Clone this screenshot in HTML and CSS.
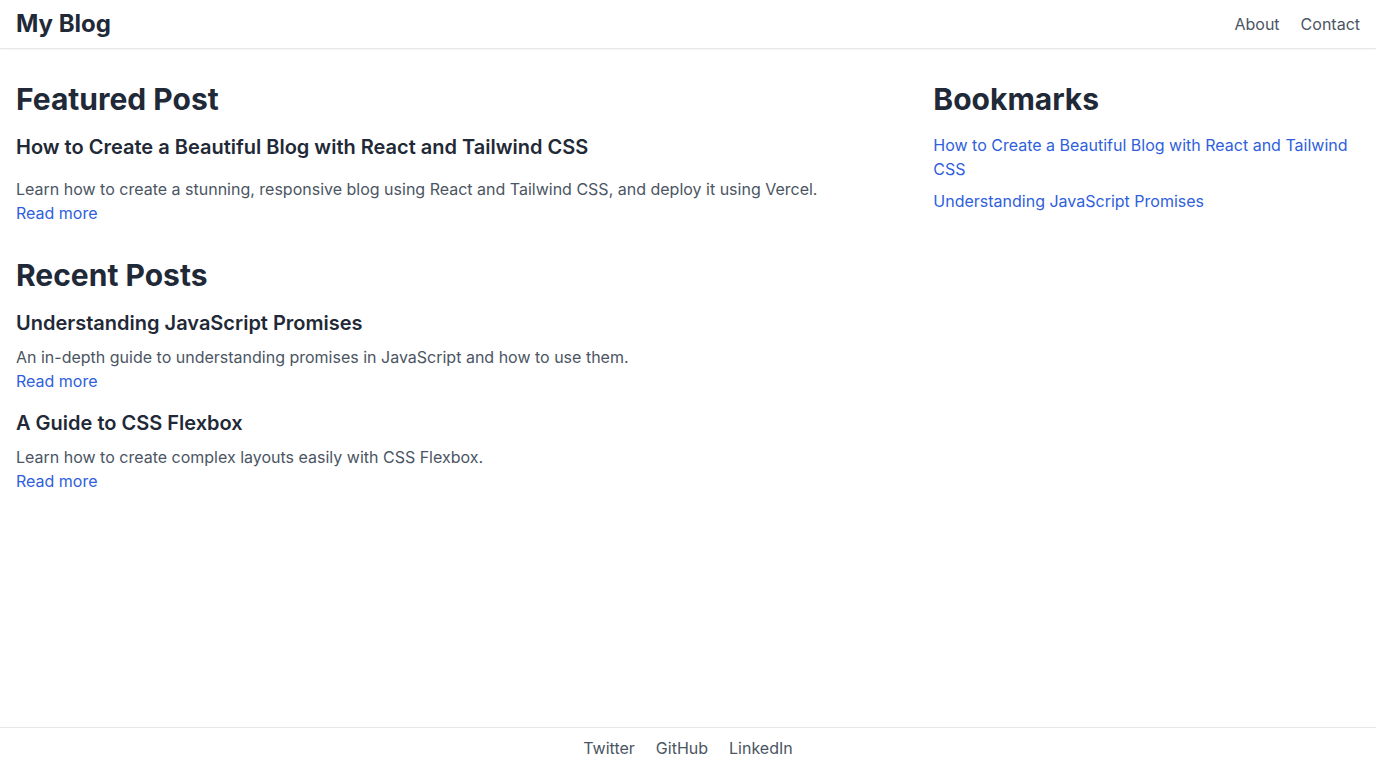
FILE: index.html
```html
<!DOCTYPE html>
<html lang="en">
<head>
<meta charset="utf-8">
<title>My Blog</title>
<link rel="stylesheet" href="styles.css">
</head>
<body>
<div class="page">
  <header class="site-header">
    <a class="brand" href="#">My Blog</a>
    <nav class="nav">
      <a href="#">About</a>
      <a href="#">Contact</a>
    </nav>
  </header>
  <main class="main">
    <div class="content">
      <section class="featured">
        <h2 class="section-title">Featured Post</h2>
        <article>
          <h3 class="post-title featured-title">How to Create a Beautiful Blog with React and Tailwind CSS</h3>
          <p class="post-desc">Learn how to create a stunning, responsive blog using React and Tailwind CSS, and deploy it using Vercel.</p>
          <a class="link" href="#">Read more</a>
        </article>
      </section>
      <section class="recent">
        <h2 class="section-title">Recent Posts</h2>
        <div class="post-list">
          <article>
            <h3 class="post-title">Understanding JavaScript Promises</h3>
            <p class="post-desc">An in-depth guide to understanding promises in JavaScript and how to use them.</p>
            <a class="link" href="#">Read more</a>
          </article>
          <article>
            <h3 class="post-title">A Guide to CSS Flexbox</h3>
            <p class="post-desc">Learn how to create complex layouts easily with CSS Flexbox.</p>
            <a class="link" href="#">Read more</a>
          </article>
        </div>
      </section>
    </div>
    <aside class="sidebar">
      <h2 class="section-title">Bookmarks</h2>
      <ul class="bookmarks">
        <li><a class="link" href="#">How to Create a Beautiful Blog with React and Tailwind CSS</a></li>
        <li><a class="link" href="#">Understanding JavaScript Promises</a></li>
      </ul>
    </aside>
  </main>
  <footer class="site-footer">
    <a href="#">Twitter</a>
    <a href="#">GitHub</a>
    <a href="#">LinkedIn</a>
  </footer>
</div>
</body>
</html>
```
FILE: styles.css
```css
* { box-sizing: border-box; }
html, body { margin: 0; padding: 0; }
body {
  font-family: Inter, "Noto Sans", sans-serif;
  font-size: 16px;
  line-height: 24px;
  color: #1f2937;
  background: #ffffff;
}
a { text-decoration: none; }
h2, h3, p, ul { margin: 0; padding: 0; }
.page {
  min-height: 100vh;
  display: flex;
  flex-direction: column;
}
.site-header {
  display: flex;
  justify-content: space-between;
  align-items: center;
  padding: 8px 16px;
  border-bottom: 1px solid #e5e7eb;
  box-shadow: 0 1px 2px rgba(0,0,0,0.04);
}
.brand {
  font-size: 24px;
  line-height: 32px;
  font-weight: 700;
  color: #1f2937;
}
.nav { display: flex; gap: 21px; }
.nav a, .site-footer a { color: #4b5563; }
.main {
  flex: 1;
  display: grid;
  grid-template-columns: repeat(3, 1fr);
  gap: 32px;
  padding: 32px 16px;
  align-content: start;
}
.content { grid-column: span 2; }
.section-title {
  font-size: 30px;
  line-height: 36px;
  font-weight: 700;
  color: #1f2937;
  margin-bottom: 16px;
}
.featured { margin-bottom: 32px; }
.post-title {
  font-size: 20px;
  line-height: 28px;
  font-weight: 600;
  color: #1f2937;
  margin-bottom: 8px;
}
.featured-title { margin-bottom: 16px; }
.post-desc { color: #4b5563; }
.link { color: #2f5fdc; }
.post-list { display: flex; flex-direction: column; gap: 16px; }
.bookmarks { list-style: none; display: flex; flex-direction: column; gap: 8px; }
.site-footer {
  display: flex;
  justify-content: center;
  gap: 21px;
  padding: 8px 16px;
  border-top: 1px solid #e5e7eb;
}
```
